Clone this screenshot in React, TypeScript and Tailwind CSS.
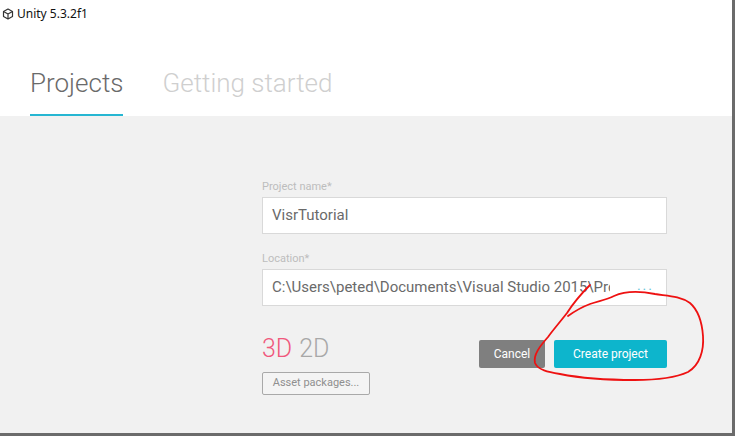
import React from 'react';

function UnityLogo() {
  return (
    <svg width="12" height="12" viewBox="0 0 24 24" className="text-[#333]">
      <path
        d="M12 2 L21 7 L21 17 L12 22 L3 17 L3 7 Z M12 12 L21 7 M12 12 L12 22 M12 12 L3 7"
        fill="none"
        stroke="currentColor"
        strokeWidth="2.4"
        strokeLinejoin="round"
      />
    </svg>
  );
}

export default function App() {
  return (
    <div className="w-[736px] h-[437px] bg-white overflow-hidden" style={{ fontFamily: 'Roboto, "Noto Sans", sans-serif' }}>
      <div className="relative w-[735px] h-[436px] border-r-[3px] border-b-[3px] border-[#6b6b6b] flex flex-col">
        {/* Title bar */}
        <div className="h-[26px] flex items-center gap-[3px] pl-[2px] pt-[2px] bg-white">
          <UnityLogo />
          <span className="text-[12px] text-[#111]" style={{ fontFamily: '"Noto Sans", "Liberation Sans", sans-serif' }}>
            Unity 5.3.2f1
          </span>
        </div>

        {/* Tabs */}
        <div className="h-[90px] bg-white flex items-end pl-[30px] gap-[39px]">
          <div className="flex flex-col">
            <span className="text-[26px] font-light text-[#6a6a6a] leading-none pb-[18px]">Projects</span>
            <div className="h-[2px] bg-[#26b6d2]" />
          </div>
          <div className="flex flex-col">
            <span className="text-[26px] font-light text-[#cfcfcf] leading-none pb-[20px]">Getting started</span>
          </div>
        </div>

        {/* Body */}
        <div className="flex-1 bg-[#f1f1f1] pl-[262px] pt-[65px]">
          <div className="w-[405px] flex flex-col">
            <label className="text-[11px] text-[#bdbdbd] leading-none mb-[5px]">Project name*</label>
            <div className="h-[37px] bg-white border border-[#d9d9d9] flex items-center px-[9px]">
              <span className="text-[15px] text-[#6a6a6a]">VisrTutorial</span>
            </div>

            <label className="text-[11px] text-[#bdbdbd] leading-none mt-[19px] mb-[5px]">Location*</label>
            <div className="h-[37px] bg-white border border-[#d9d9d9] flex items-center pl-[9px] pr-[12px]">
              <span className="text-[15px] text-[#6a6a6a] w-[338px] overflow-hidden whitespace-nowrap">
                C:\Users\peted\Documents\Visual Studio 2015\Projects
              </span>
              <span className="ml-auto text-[14px] text-[#66c6da] tracking-[2px] leading-none -mt-[6px]">...</span>
            </div>

            <div className="flex items-start mt-[34px]">
              <div className="flex flex-col -mt-[4px]">
                <div className="text-[25px] font-light leading-none flex gap-[7px]">
                  <span className="text-[#f0587c]">3D</span>
                  <span className="text-[#a8a8a8]">2D</span>
                </div>
                <button className="mt-[11px] w-[108px] h-[23px] border border-[#a9a9a9] rounded-[2px] text-[11px] text-[#8f8f8f] bg-[#f4f4f4]">
                  Asset packages...
                </button>
              </div>
              <div className="ml-auto flex gap-[9px]">
                <button className="w-[66px] h-[28px] bg-[#7f7f7f] text-white text-[12px] rounded-[2px]">Cancel</button>
                <button className="w-[113px] h-[28px] bg-[#0db5cc] text-white text-[12px] rounded-[2px]">Create project</button>
              </div>
            </div>
          </div>
        </div>

        {/* Red hand-drawn annotation */}
        <svg className="absolute left-0 top-0 pointer-events-none" width="736" height="437">
          <path
            d="M590 285 C582 293 574 302 567 313 C560 322 553 330 548 337 C540 346 533 355 535 363 C538 370 548 372 560 374 C580 378 605 380 635 380 C655 380 675 378 688 372 C700 365 704 350 703 336 C702 322 698 310 690 303 C680 296 668 296 655 294 C640 291 625 291 614 296 C606 300 598 301 590 304 C582 307 575 311 568 316"
            fill="none"
            stroke="#ee1111"
            strokeWidth="1.8"
            strokeLinecap="round"
          />
        </svg>
      </div>
    </div>
  );
}
